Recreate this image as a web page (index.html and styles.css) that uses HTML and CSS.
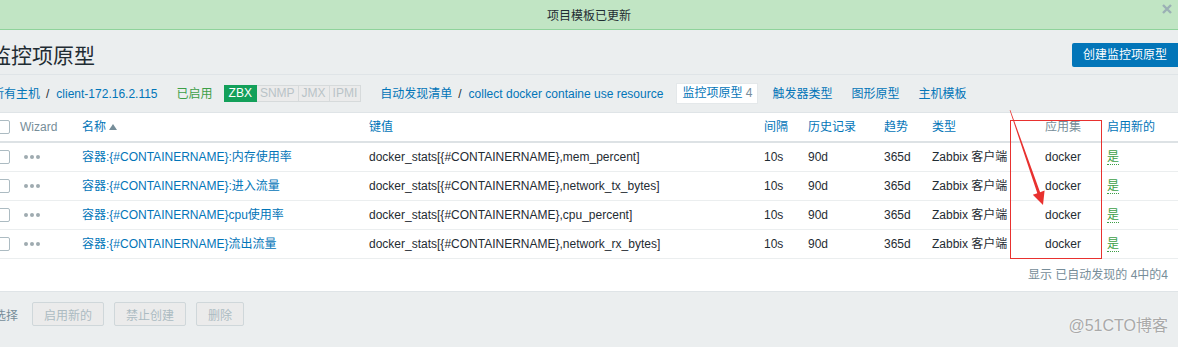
FILE: index.html
```html
<!DOCTYPE html>
<html lang="zh-CN">

<head>
  <meta charset="UTF-8" />
  <title>监控项原型</title>
  <link rel="stylesheet" href="styles.css">
</head>

<body>
  <div class="msg-good">
    项目模板已更新
    <svg class="msg-close" width="10" height="10" viewBox="0 0 10 10">
      <path d="M1 1 L9 9 M9 1 L1 9" stroke="#9bb0b5" stroke-width="2.4" />
    </svg>
  </div>

  <div class="wrap">
    <header class="head">
      <h1>监控项原型</h1>
      <button class="btn-create">创建监控项原型</button>
    </header>

    <nav class="crumbs">
      <span class="path"><a>所有主机</a><span class="sep">/</span><a>client-172.16.2.115</a></span>
      <span class="enabled">已启用</span>
      <span class="badges">
        <span class="badge on">ZBX</span><span class="badge">SNMP</span><span class="badge">JMX</span><span class="badge">IPMI</span>
      </span>
      <span class="path"><a>自动发现清单</a><span class="sep">/</span><a>collect docker containe use resource</a></span>
      <span class="tab"><a>监控项原型</a> 4</span>
      <a class="nav-link">触发器类型</a>
      <a class="nav-link">图形原型</a>
      <a class="nav-link">主机模板</a>
    </nav>

    <div class="list">
      <table>
        <colgroup>
          <col style="width:28px">
          <col style="width:62px">
          <col style="width:287px">
          <col style="width:395px">
          <col style="width:44px">
          <col style="width:76px">
          <col style="width:48px">
          <col style="width:113px">
          <col style="width:62px">
          <col style="width:76px">
        </colgroup>
        <thead>
          <tr>
            <th><span class="check"></span></th>
            <th class="plain">Wizard</th>
            <th><a>名称</a><span class="arrow"></span></th>
            <th><a>键值</a></th>
            <th><a>间隔</a></th>
            <th><a>历史记录</a></th>
            <th><a>趋势</a></th>
            <th><a>类型</a></th>
            <th class="plain">应用集</th>
            <th><a>启用新的</a></th>
          </tr>
        </thead>
        <tbody>
          <tr>
            <td><span class="check"></span></td>
            <td><span class="dots"><i></i><i></i><i></i></span></td>
            <td><a>容器:{#CONTAINERNAME}:内存使用率</a></td>
            <td>docker_stats[{#CONTAINERNAME},mem_percent]</td>
            <td>10s</td>
            <td>90d</td>
            <td>365d</td>
            <td>Zabbix 客户端</td>
            <td>docker</td>
            <td><span class="yes">是</span></td>
          </tr>
          <tr>
            <td><span class="check"></span></td>
            <td><span class="dots"><i></i><i></i><i></i></span></td>
            <td><a>容器:{#CONTAINERNAME}:进入流量</a></td>
            <td>docker_stats[{#CONTAINERNAME},network_tx_bytes]</td>
            <td>10s</td>
            <td>90d</td>
            <td>365d</td>
            <td>Zabbix 客户端</td>
            <td>docker</td>
            <td><span class="yes">是</span></td>
          </tr>
          <tr>
            <td><span class="check"></span></td>
            <td><span class="dots"><i></i><i></i><i></i></span></td>
            <td><a>容器:{#CONTAINERNAME}cpu使用率</a></td>
            <td>docker_stats[{#CONTAINERNAME},cpu_percent]</td>
            <td>10s</td>
            <td>90d</td>
            <td>365d</td>
            <td>Zabbix 客户端</td>
            <td>docker</td>
            <td><span class="yes">是</span></td>
          </tr>
          <tr>
            <td><span class="check"></span></td>
            <td><span class="dots"><i></i><i></i><i></i></span></td>
            <td><a>容器:{#CONTAINERNAME}流出流量</a></td>
            <td>docker_stats[{#CONTAINERNAME},network_rx_bytes]</td>
            <td>10s</td>
            <td>90d</td>
            <td>365d</td>
            <td>Zabbix 客户端</td>
            <td>docker</td>
            <td><span class="yes">是</span></td>
          </tr>
        </tbody>
      </table>
      <div class="paging">显示 已自动发现的 4中的4</div>
    </div>

    <div class="actions">
      <span class="selected">选择</span>
      <button class="btn-alt" disabled>启用新的</button>
      <button class="btn-alt" disabled>禁止创建</button>
      <button class="btn-alt" disabled>删除</button>
    </div>
  </div>

  <!-- screenshot annotation -->
  <svg class="annot" width="1178" height="347" viewBox="0 0 1178 347">
    <rect x="1010.5" y="120.5" width="91" height="138" fill="none" stroke="#e8312f" stroke-width="1" />
    <polygon fill="#e8312f"
      points="1010.3,110 1040.1,192.2 1044.6,190.6 1043,205 1032.8,194.8 1037.3,193.2 1009.7,110.2" />
  </svg>

  <div class="watermark">@51CTO博客</div>
</body>

</html>
```

FILE: styles.css
```css
body {
  margin: 0;
  background: #ebeeef;
  font-family: "Liberation Sans", "Noto Sans CJK SC", sans-serif;
  font-size: 12px;
  color: #1f2c33;
  overflow: hidden;
  position: relative;
  height: 347px;
}

a {
  color: #0275b8;
  text-decoration: none;
}

.msg-good {
  position: relative;
  height: 29px;
  line-height: 32px;
  overflow: hidden;
  background: #c1e5c4;
  border-bottom: 1px solid #8fd39b;
  text-align: center;
  font-size: 12px;
  color: #1f2c33;
}

.msg-close {
  position: absolute;
  right: 6px;
  top: 4px;
}

.wrap {
  margin-left: -13px;
  width: 1191px;
}

.head {
  display: flex;
  align-items: center;
  justify-content: space-between;
  height: 38px;
  padding-top: 6px;
  border-bottom: 1px solid #dfe4e7;
}

.head h1 {
  margin: 0 0 0 3px;
  padding-top: 2px;
  font-size: 21px;
  font-weight: normal;
  line-height: 26px;
  color: #1f2c33;
}

.btn-create {
  height: 24px;
  padding: 0 11px;
  border: none;
  border-radius: 2px 0 0 2px;
  background: #0275b8;
  color: #fff;
  font-family: inherit;
  font-size: 12px;
  line-height: 24px;
}

.crumbs {
  display: flex;
  align-items: center;
  height: 37px;
  padding-left: 5px;
  border-bottom: 1px solid #dfe4e7;
  line-height: 16px;
  white-space: nowrap;
}

.sep {
  margin: 0 7px 0 6px;
  color: #1f2c33;
}

.path {
  margin-right: 19px;
}

.enabled {
  color: #3d9f47;
  margin-right: 11px;
}

.badges {
  display: flex;
  margin-right: 19px;
}

.badge {
  height: 15px;
  line-height: 15px;
  padding: 0 3px;
  border: 1px solid #d6dadb;
  border-left: none;
  background: #ebebeb;
  color: #b9c3c7;
}

.badge.on {
  border: 1px solid #13a05a;
  background: #13a05a;
  color: #fff;
  padding: 0 4px;
}

.crumbs .path + .tab {
  margin-left: -6px;
}

.tab {
  height: 19px;
  line-height: 19px;
  padding: 0 5px;
  background: #fff;
  border: 1px solid #e4e8ea;
  color: #768d99;
  margin-right: 14px;
}

.nav-link {
  margin-right: 19px;
}

.list {
  background: #fff;
  border-bottom: 1px solid #dfe4e7;
}

table {
  table-layout: fixed;
  border-collapse: collapse;
  width: 1191px;
}

th,
td {
  padding: 0 5px;
  text-align: left;
  white-space: nowrap;
  overflow: hidden;
  line-height: 14px;
}

th {
  height: 28px;
  font-weight: normal;
  border-bottom: 2px solid #dde2e5;
}

th.plain {
  color: #768d99;
}

td {
  height: 28px;
  border-bottom: 1px solid #ebeeef;
}

.arrow {
  display: inline-block;
  margin-left: 3px;
  border-left: 4px solid transparent;
  border-right: 4px solid transparent;
  border-bottom: 6px solid #768d99;
  vertical-align: 1px;
}

.check {
  display: block;
  width: 12px;
  height: 12px;
  margin-left: 4px;
  border: 1px solid #acbbc2;
  border-radius: 2px;
  background: #fff;
}

.dots {
  display: flex;
  gap: 2px;
  margin-left: 4px;
}

.dots i {
  width: 4px;
  height: 4px;
  border-radius: 50%;
  background: #9fabb0;
}

.yes {
  color: #3d9f47;
  border-bottom: 1px dotted #3d9f47;
}

.paging {
  height: 32px;
  line-height: 33px;
  text-align: right;
  padding-right: 10px;
  color: #768d99;
}

.actions {
  display: flex;
  align-items: center;
  padding: 10px 0 0 7px;
}

.selected {
  color: #768d99;
  margin-right: 14px;
}

.btn-alt {
  height: 24px;
  padding: 0 11px;
  margin-right: 10px;
  border: 1px solid #cfd7da;
  border-radius: 2px;
  background: #ebebeb;
  color: #acbbc2;
  font-family: inherit;
  font-size: 12px;
}

.annot {
  position: absolute;
  top: 0;
  left: 0;
  pointer-events: none;
}

.watermark {
  position: absolute;
  right: 10px;
  top: 315px;
  font-size: 16px;
  line-height: 22px;
  color: #a9a9a9;
  text-shadow: 0 0 2px #fff;
}
```
